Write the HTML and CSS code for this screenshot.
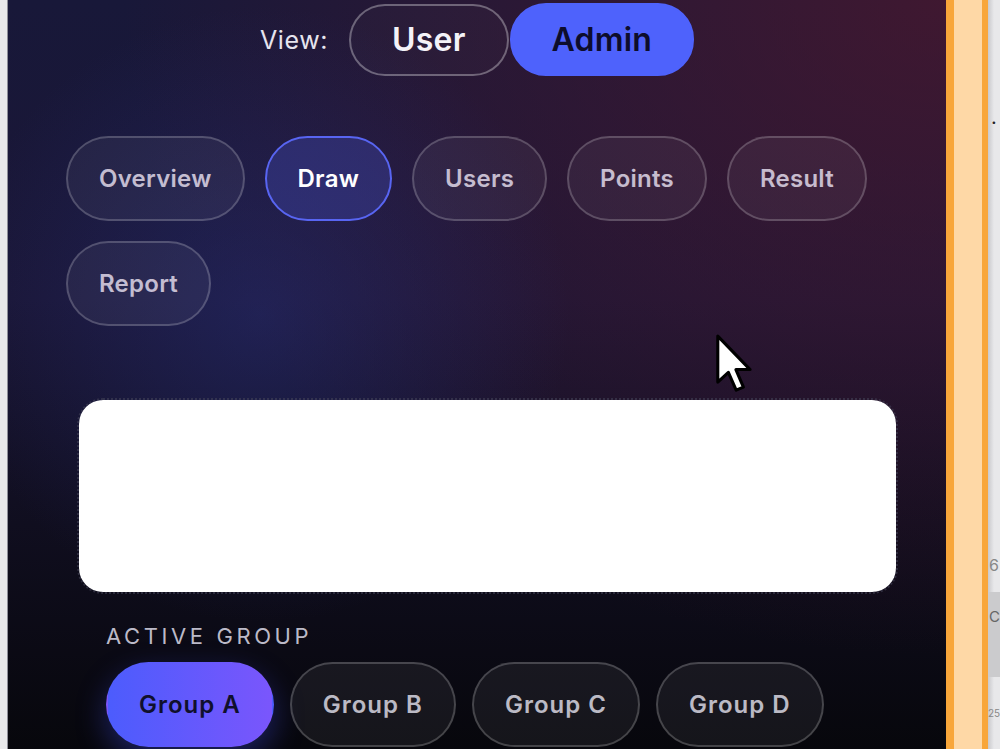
FILE: index.html
```html
<!DOCTYPE html>
<html lang="en">
<head>
    <meta charset="UTF-8">
    <meta name="viewport" content="width=device-width, initial-scale=1.0">
    <title>Draw Admin</title>
    <link rel="stylesheet" href="styles.css">
</head>
<body>
    <div class="edge-left"></div>

    <main class="panel">
        <div class="view-row">
            <span class="view-label">View:</span>
            <button class="view-btn">User</button>
            <button class="view-btn active">Admin</button>
        </div>

        <nav class="tabs">
            <button class="tab">Overview</button>
            <button class="tab active">Draw</button>
            <button class="tab">Users</button>
            <button class="tab">Points</button>
            <button class="tab">Result</button>
            <button class="tab">Report</button>
        </nav>

        <div class="canvas"></div>

        <div class="group-label">ACTIVE GROUP</div>
        <div class="groups">
            <button class="group active">Group A</button>
            <button class="group">Group B</button>
            <button class="group">Group C</button>
            <button class="group">Group D</button>
        </div>

        <!-- mouse pointer sitting over the panel -->
        <svg class="cursor" viewBox="0 0 14 22" width="39" height="62">
            <path d="M1 1 L1 17.5 L4.8 14 L7.6 20.4 L10.2 19.3 L7.5 13 L12.6 13 Z"
                  fill="#fff" stroke="#000" stroke-width="1.1" stroke-linejoin="round"/>
        </svg>
    </main>

    <div class="divider"></div>

    <aside class="peek">
        <span class="peek-dot">.</span>
        <span class="peek-num">6</span>
        <div class="peek-bar">C</div>
        <span class="peek-small">25</span>
    </aside>
</body>
</html>
```

FILE: styles.css
```css
body {
    margin: 0;
    height: 749px;
    overflow: hidden;
    display: flex;
    font-family: Inter, "Noto Sans", sans-serif;
    background: #e4e4e4;
}
button {
    font-family: inherit;
    cursor: pointer;
}

.edge-left {
    width: 7px;
    flex: none;
    background: #e8e8ea;
    border-right: 1px solid #8e8e98;
}

.panel {
    position: relative;
    width: 938px;
    flex: none;
    box-sizing: border-box;
    background:
        radial-gradient(circle at 27% 42%, rgba(42, 50, 128, 0.42), transparent 38%),
        radial-gradient(ellipse at 100% 0%, rgba(84, 24, 44, 0.65), transparent 62%),
        linear-gradient(180deg, #181839 0%, #1a1636 40%, #100e1f 70%, #07070c 100%);
}

/* view switch */
.view-row {
    display: flex;
    justify-content: center;
    align-items: center;
    padding-top: 3px;
    height: 73px;
}
.view-label {
    color: #e6e4ee;
    font-size: 25px;
    letter-spacing: 0.6px;
    margin-right: 21px;
}
.view-btn {
    height: 72px;
    padding: 0 41px;
    border-radius: 36px;
    border: 2px solid rgba(255, 255, 255, 0.32);
    background: rgba(255, 255, 255, 0.02);
    color: #f4f2f8;
    font-size: 32px;
    font-weight: 600;
    letter-spacing: 0.2px;
}
.view-btn.active {
    height: 73px;
    padding: 0 40px;
    margin-left: 1px;
    border-color: #4e62fc;
    background: #4e62fc;
    color: #0d0d2c;
}

/* section tabs */
.tabs {
    display: flex;
    flex-wrap: wrap;
    gap: 20px;
    width: 820px;
    margin: 60px 0 0 58px;
}
.tab {
    height: 85px;
    padding: 0 31px;
    border-radius: 43px;
    border: 2px solid rgba(255, 255, 255, 0.2);
    background: rgba(255, 255, 255, 0.05);
    color: rgba(232, 224, 240, 0.82);
    font-size: 24px;
    font-weight: 600;
    letter-spacing: 0.25px;
}
.tab.active {
    border-color: #5865f2;
    background: rgba(68, 76, 190, 0.35);
    color: #ffffff;
}

/* drawing area */
.canvas {
    height: 192px;
    margin: 74px 50px 0 71px;
    background: #ffffff;
    border-radius: 24px;
    outline: 2px dotted rgba(70, 70, 90, 0.55);
}

/* groups */
.group-label {
    margin: 31px 0 0 98px;
    color: #bcbac8;
    font-size: 22px;
    letter-spacing: 3.6px;
    line-height: 26px;
}
.groups {
    display: flex;
    gap: 16px;
    margin: 13px 0 0 98px;
}
.group {
    height: 85px;
    padding: 0 31px;
    border-radius: 43px;
    border: 2px solid rgba(255, 255, 255, 0.2);
    background: rgba(255, 255, 255, 0.06);
    color: rgba(226, 224, 236, 0.82);
    font-size: 24px;
    font-weight: 600;
    letter-spacing: 1px;
}
.group.active {
    border-color: transparent;
    background: linear-gradient(90deg, #4c5cfd, #7a56fc);
    color: #10102c;
    box-shadow: 0 12px 30px rgba(70, 84, 255, 0.35);
}

.cursor {
    position: absolute;
    left: 707px;
    top: 333px;
}

/* next window peeking on the right */
.divider {
    width: 28px;
    flex: none;
    background: #fed8a6;
    border-left: 8px solid #f8a63a;
    border-right: 6px solid #f8a63a;
}
.peek {
    flex: 1;
    display: flex;
    flex-direction: column;
    background: linear-gradient(90deg, #c9c9cc, #e8e8ea 50%);
    color: #888;
    overflow: hidden;
}
.peek-dot {
    margin: 102px 0 0 3px;
    color: #222;
    font-size: 20px;
    line-height: 30px;
}
.peek-num {
    margin-top: 418px;
    padding-left: 1px;
    font-size: 16px;
    line-height: 30px;
}
.peek-bar {
    height: 85px;
    margin-top: 12px;
    padding-left: 1px;
    background: #cbcbcd;
    color: #666;
    font-size: 15px;
    line-height: 50px;
}
.peek-small {
    margin-top: 26px;
    font-size: 10px;
    line-height: 20px;
}
```
